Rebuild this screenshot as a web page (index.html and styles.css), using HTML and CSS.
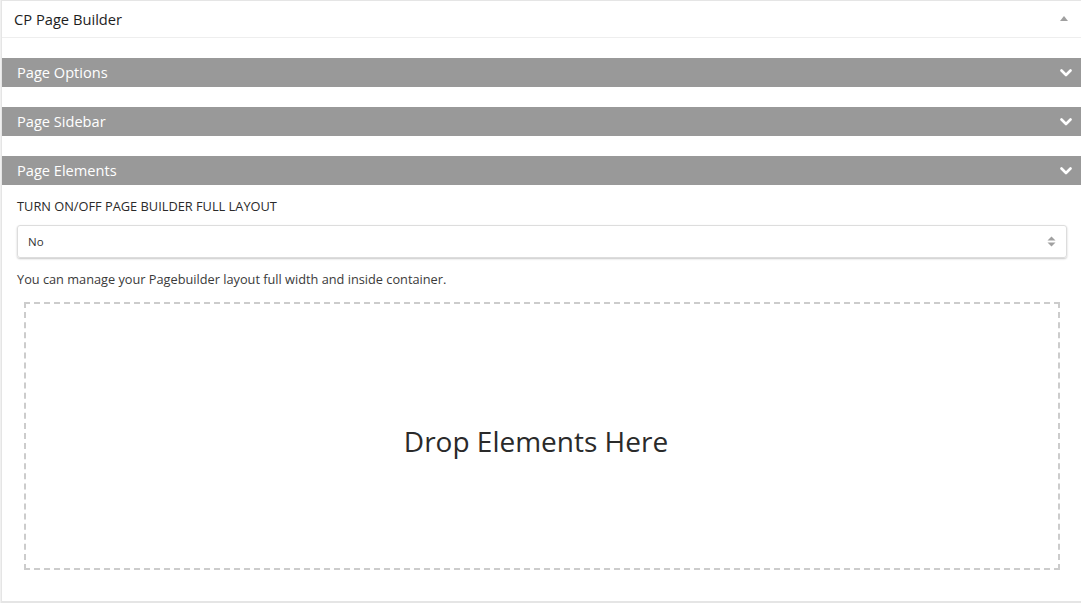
FILE: index.html
```html
<!DOCTYPE html>
<html>
<head>
<meta charset="utf-8">
<title>CP Page Builder</title>
<link rel="stylesheet" href="styles.css">
</head>
<body>
<div class="postbox">
  <div class="postbox-header">
    <h2 class="postbox-title">CP Page Builder</h2>
    <span class="toggle-arrow"></span>
  </div>
  <div class="inside">
    <div class="section">
      <div class="section-bar"><span class="bar-title">Page Options</span>
        <svg class="chev" width="12" height="8" viewBox="0 0 12 8"><path d="M1.5 1.5 L6 6 L10.5 1.5" fill="none" stroke="#fff" stroke-width="2.6" stroke-linecap="round" stroke-linejoin="round"/></svg>
      </div>
    </div>
    <div class="section">
      <div class="section-bar"><span class="bar-title">Page Sidebar</span>
        <svg class="chev" width="12" height="8" viewBox="0 0 12 8"><path d="M1.5 1.5 L6 6 L10.5 1.5" fill="none" stroke="#fff" stroke-width="2.6" stroke-linecap="round" stroke-linejoin="round"/></svg>
      </div>
    </div>
    <div class="section">
      <div class="section-bar"><span class="bar-title">Page Elements</span>
        <svg class="chev" width="12" height="8" viewBox="0 0 12 8"><path d="M1.5 1.5 L6 6 L10.5 1.5" fill="none" stroke="#fff" stroke-width="2.6" stroke-linecap="round" stroke-linejoin="round"/></svg>
      </div>
      <div class="section-body">
        <label class="field-label">TURN ON/OFF PAGE BUILDER FULL LAYOUT</label>
        <div class="select">
          <span>No</span>
          <svg class="updown" width="9" height="13" viewBox="0 0 9 13"><path d="M4.5 1.5 L8.5 5.5 L0.5 5.5 Z M4.5 11.5 L8.5 7.5 L0.5 7.5 Z" fill="#a0a0a0"/></svg>
        </div>
        <p class="help">You can manage your Pagebuilder layout full width and inside container.</p>
        <div class="dropzone">
          <span>Drop Elements Here</span>
        </div>
      </div>
    </div>
  </div>
</div>
</body>
</html>
```
FILE: styles.css
```css
html, body {
  margin: 0;
  padding: 0;
  overflow: hidden;
  background: #fff;
}
body {
  padding-left: 1px;
  font-family: "Open Sans", "Noto Sans", sans-serif;
  color: #23282d;
}
.postbox {
  box-sizing: border-box;
  width: 1081px;
  height: 603px;
  border: 1px solid #e5e5e5;
  border-bottom-width: 2px;
  box-shadow: -1px 0 0 #f0f0f0;
  background: #fff;
}
.postbox-header {
  display: flex;
  align-items: center;
  justify-content: space-between;
  height: 36px;
  border-bottom: 1px solid #eee;
  padding: 0 13px 0 12px;
}
.postbox-title {
  margin: 0;
  font-size: 14.7px;
  font-weight: 400;
  color: #1e1e1e;
  line-height: 1;
}
.toggle-arrow {
  width: 0;
  height: 0;
  border-left: 4px solid transparent;
  border-right: 4px solid transparent;
  border-bottom: 5px solid #a0a0a0;
  margin-top: -2px;
}
.inside {
  padding-top: 20px;
}
.section {
  margin-bottom: 20px;
}
.section-bar {
  display: flex;
  align-items: center;
  justify-content: space-between;
  height: 29px;
  background: #999999;
  color: #fff;
  font-size: 14.6px;
  padding: 0 9px 0 15px;
}
.bar-title {
  margin-top: -2px;
}
.chev {
  display: block;
}
.section-body {
  padding: 12px 14px 0 15px;
}
.field-label {
  display: block;
  font-size: 12.8px;
  color: #2a2a2a;
  line-height: 18px;
}
.select {
  display: flex;
  align-items: center;
  justify-content: space-between;
  box-sizing: border-box;
  height: 33px;
  margin-top: 10px;
  border: 1px solid #ddd;
  border-radius: 3px;
  box-shadow: 0 1px 2px rgba(0,0,0,0.22);
  padding: 0 10px 0 10px;
  font-size: 11.5px;
  color: #333;
}
.updown {
  display: block;
  margin-top: -1px;
}
.help {
  margin: 12px 0 0 0;
  font-size: 12.75px;
  color: #3a3a3a;
  line-height: 18px;
}
.dropzone {
  display: flex;
  align-items: center;
  justify-content: center;
  box-sizing: border-box;
  height: 268px;
  margin: 14px 7px 0 7px;
  padding-right: 12px;
  border: 2px dashed #cccccc;
  font-size: 28px;
  color: #2a2a2a;
}
.dropzone span {
  position: relative;
  top: 5px;
}
```
